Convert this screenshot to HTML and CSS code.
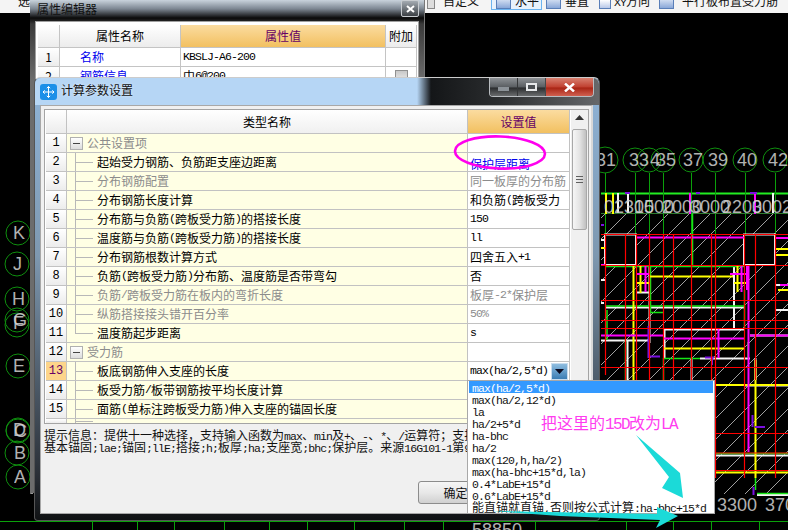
FILE: index.html
```html
<!DOCTYPE html>
<html lang="zh-CN">
<head>
<meta charset="utf-8">
<title>计算参数设置</title>
<link rel="stylesheet" href="styles.css">
</head>
<body>
<div class="desktop">

  <div class="toolbar">
    <span class="tb-frag tb-a">选</span>
    <i class="tb-icon tb-first"></i><span class="tb-text tb-gap1">自定义</span>
    <span class="tb-btn"><i class="tb-icon"></i><span class="tb-text">水平</span></span>
    <i class="tb-icon tb-gap2"></i><span class="tb-text tb-gap3">垂直</span>
    <i class="tb-icon tb-gap4 tb-small"></i><span class="tb-text tb-gap5"><b class="m">XY</b>方向</span>
    <i class="tb-icon tb-gap6"></i><span class="tb-text tb-gap7">平行板布置受力筋</span>
  </div>

  <svg class="cad" viewBox="0 0 788 530" aria-hidden="true">
    <defs>
      <pattern id="hatch" width="21" height="21" patternUnits="userSpaceOnUse">
        <path d="M-1 22 L22 -1" stroke="#c8c8c8" stroke-width="0.8"/>
      </pattern>
    </defs>
    <rect x="601" y="213" width="187" height="290" fill="url(#hatch)"/>
    <rect x="606" y="235" width="30" height="30" fill="#000"/>
    <rect x="745" y="235" width="30" height="30" fill="#000"/>
    <rect x="601" y="494" width="187" height="12" fill="#000"/>

    <g class="ln-grid">
      <path d="M601 193.500H788"/>
      <path d="M605.500 173V234M635.500 173V234M649.500 173V234M663.500 173V234M691.500 173V234M715.500 173V234M745.500 173V234M775.500 173V234"/>
      <path d="M0 521.500H788"/>
      <path d="M92.500 521V530M137.500 521V530M174.500 521V530M224.500 521V530M269.500 521V530M307.500 521V530M354.500 521V530M404.500 521V530M443.500 521V530M535.500 521V530M626.500 521V530M673.500 521V530M711.500 521V530M759.500 521V530"/>
    </g>
    <path class="ln-dim" d="M601 213.500H788"/>

    <g class="ln-w">
      <path d="M605 234.500H636V265H605ZM744 234.500H775V265H744Z"/>
      <path d="M618 193V213M628 193V213M773 193V213"/>
      <path d="M649.500 266V343M734 266V328"/>
      <path d="M605 307.500H744"/>
      <path d="M664 329.500H744M601 340.500H649M700 358.500H750M637 292.500H649"/>
      <path d="M664.500 329V358M627.500 341V500M691.500 358V500M755.500 358V380M757 495H788M750 335.500H788M745 385.500H788"/>
      <path d="M775 285H788M775 310H788M715 455.500H788M601 303H604M601 240H606M601 280H606"/>
    </g>
    <g class="ln-g">
      <path d="M692.500 213V265M605 266.500H744M650.500 266V312M744.500 290V328M605 306H744M625.500 340V500M663.500 358V500M664 358.500H700M755.500 478V490M748 342V358M757 493.500H788M664 312.500H650M715 453.500H788M607 310V340"/>
    </g>
    <g class="ln-y">
      <path d="M633.500 266V500M640.500 266V293M650 276.500H733M637 283H650M737.500 266V292M734 283H748"/>
      <path d="M664 348.500H744M755.500 360V478M715 385H788M715 472.500H788M775 249H788M775 255H788M601 248H606M613 193V214M778 290H788M606 193V214"/>
    </g>
    <g class="ln-m">
      <path d="M636 237.500H744M775 238H788M645.500 266V292M636 274H650M741.500 266V292M747 266V290M730 274H746M748.500 266V452"/>
      <path d="M601 335.500H663M664 338.500H744M718.500 328V358M750 335.500H788M780 285H788M755 193V214M690 193V214M601 265H606"/>
    </g>
    <g class="ln-p">
      <path d="M648.500 326V358M648 356.500H660M705 357.500H714M712 358V365M753.500 487V495M755 427H765M752.500 415V427M601 225H604M625 193H630M696 193H700M750 193H757"/>
    </g>
    <g class="ln-r">
      <path d="M601 234.500H788M601 265.500H788M601 300.500H788M601 320.500H788M601 328.500H788M601 367.500H788M715 433.500H788M715 453H788M715 470.500H788"/>
      <path d="M605.500 234V375M625.500 234V380M636.500 234V380M649.500 234V380M663.500 234V380M673.500 234V380M691.500 234V380M711.500 234V380M715.500 234V478M744.500 234V478M755.500 234V380M775.500 234V478"/>
    </g>

    <g class="cir">
      <circle cx="605" cy="160" r="13"/><circle cx="635" cy="160" r="12"/><circle cx="649" cy="160" r="12"/><circle cx="663" cy="160" r="12"/><circle cx="691" cy="160" r="12"/><circle cx="715" cy="160" r="12"/><circle cx="745" cy="160" r="12"/><circle cx="775" cy="160" r="12"/>
      <circle cx="18" cy="233" r="12"/><circle cx="17" cy="264" r="12"/><circle cx="17" cy="299" r="12"/><circle cx="17" cy="320" r="12"/><circle cx="17" cy="325" r="12"/><circle cx="18" cy="366" r="12"/><circle cx="18" cy="430" r="12"/><circle cx="18" cy="431" r="12"/><circle cx="17" cy="453" r="12"/><circle cx="18" cy="477" r="12"/>
    </g>
    <g class="lbl">
      <text x="596" y="166">31</text><text x="629" y="166">33</text><text x="650" y="166">4</text><text x="656" y="166">35</text><text x="683" y="166">37</text><text x="708" y="166">39</text><text x="737" y="166">40</text><text x="768" y="166">42</text>
      <text x="13" y="239">K</text><text x="13" y="270">J</text><text x="12" y="305">H</text><text x="13" y="326">G</text><text x="13" y="329">F</text><text x="13" y="372">E</text><text x="13" y="436">D</text><text x="14" y="437">C</text><text x="14" y="459">B</text><text x="14" y="483">A</text>
      <text x="604" y="213">02300</text><text x="634" y="213">1500</text><text x="662" y="213">2000</text><text x="690" y="213">3000</text><text x="722" y="213">2200</text><text x="752" y="213">3002</text>
      <text x="717" y="511">3300</text><text x="765" y="511">3700</text>
      <text x="472" y="536">58850</text>
    </g>
    <path class="ln-thin" d="M30.500 210V493.500H33"/>
  </svg>

  <section class="win editor">
    <header class="editor-title">
      <span>属性编辑器</span>
      <button class="editor-close" type="button">
        <svg width="9" height="8" viewBox="0 0 9 8"><path d="M1 1L8 7M8 1L1 7" stroke="#fff" stroke-width="2"/></svg>
      </button>
    </header>
    <div class="editor-body">
      <div class="e-row e-head">
        <div class="e-cell e-idx"></div>
        <div class="e-cell e-center">属性名称</div>
        <div class="e-cell e-center e-hot">属性值</div>
        <div class="e-cell e-center">附加</div>
      </div>
      <div class="e-row">
        <div class="e-cell e-idx e-center">1</div>
        <div class="e-cell e-link">名称</div>
        <div class="e-cell e-val"><span class="m">KBSLJ-A6-200</span></div>
        <div class="e-cell"></div>
      </div>
      <div class="e-row">
        <div class="e-cell e-idx e-center">2</div>
        <div class="e-cell e-link">钢筋信息</div>
        <div class="e-cell e-val">中<span class="m">6@200</span></div>
        <div class="e-cell e-center"><i class="e-check"></i></div>
      </div>
    </div>
  </section>

  <section class="win calc">
    <header class="calc-title">
      <svg class="calc-icon" viewBox="0 0 17 16" width="17" height="16">
        <rect width="17" height="16" rx="3" fill="#1c8fe8"/>
        <path d="M8.500 2.500V13.500M3 8H14M6.800 4.200L8.500 2.500L10.200 4.200M6.800 11.800L8.500 13.500L10.200 11.800M4.700 6.300L3 8L4.700 9.700M12.300 6.300L14 8L12.300 9.700" fill="none" stroke="#fff" stroke-width="1"/>
      </svg>
      <span class="calc-name">计算参数设置</span>
      <div class="title-fade"></div>
      <div class="title-dark">
        <div class="caps">
          <span class="cap"><i class="cap-min"></i></span>
          <span class="cap"><i class="cap-max"></i></span>
          <span class="cap cap-close">
            <svg width="11" height="9" viewBox="0 0 11 9"><path d="M1 .5L10 8.500M10 .5L1 8.500" stroke="#fff" stroke-width="2.400"/></svg>
          </span>
        </div>
      </div>
    </header>

    <div class="panel">
      <div class="grid">
        <div class="table">
          <div class="row head">
            <div class="idx"></div>
            <div class="name-h">类型名称</div>
            <div class="val-h">设置值</div>
          </div>
          <div class="row"><div class="idx">1</div><div class="name group"><i class="exp"></i><span class="dim">公共设置项</span></div><div class="val"></div></div>
          <div class="row"><div class="idx">2</div><div class="name leaf">起始受力钢筋、负筋距支座边距离</div><div class="val link">保护层距离</div></div>
          <div class="row"><div class="idx">3</div><div class="name leaf dim">分布钢筋配置</div><div class="val dim">同一板厚的分布筋</div></div>
          <div class="row"><div class="idx">4</div><div class="name leaf">分布钢筋长度计算</div><div class="val">和负筋 <span class="m">(</span>跨板受力</div></div>
          <div class="row"><div class="idx">5</div><div class="name leaf">分布筋与负筋<span class="m">(</span>跨板受力筋<span class="m">)</span>的搭接长度</div><div class="val"><span class="m">150</span></div></div>
          <div class="row"><div class="idx">6</div><div class="name leaf">温度筋与负筋<span class="m">(</span>跨板受力筋<span class="m">)</span>的搭接长度</div><div class="val"><span class="m">ll</span></div></div>
          <div class="row"><div class="idx">7</div><div class="name leaf">分布钢筋根数计算方式</div><div class="val">四舍五入<span class="m">+1</span></div></div>
          <div class="row"><div class="idx">8</div><div class="name leaf">负筋<span class="m">(</span>跨板受力筋<span class="m">)</span>分布筋、温度筋是否带弯勾</div><div class="val">否</div></div>
          <div class="row"><div class="idx">9</div><div class="name leaf dim">负筋<span class="m">/</span>跨板受力筋在板内的弯折长度</div><div class="val dim">板厚<span class="m">-2*</span>保护层</div></div>
          <div class="row"><div class="idx">10</div><div class="name leaf dim">纵筋搭接接头错开百分率</div><div class="val dim"><span class="m">50%</span></div></div>
          <div class="row"><div class="idx">11</div><div class="name leaf last">温度筋起步距离</div><div class="val"><span class="m">s</span></div></div>
          <div class="row"><div class="idx">12</div><div class="name group"><i class="exp"></i><span class="dim">受力筋</span></div><div class="val"></div></div>
          <div class="row"><div class="idx idx-on">13</div><div class="name leaf">板底钢筋伸入支座的长度</div>
            <div class="val combo"><span class="m">max(ha/2,5*d)</span><span class="combo-btn"><svg width="9" height="5" viewBox="0 0 9 5"><path d="M0 0H9L4.500 5Z" fill="#0a0a20"/></svg></span></div></div>
          <div class="row"><div class="idx">14</div><div class="name leaf">板受力筋<span class="m">/</span>板带钢筋按平均长度计算</div><div class="val"></div></div>
          <div class="row"><div class="idx">15</div><div class="name leaf">面筋<span class="m">(</span>单标注跨板受力筋<span class="m">)</span>伸入支座的锚固长度</div><div class="val"></div></div>
          <div class="row row-cut"><div class="idx"></div><div class="name leaf"></div><div class="val"></div></div>
        </div>
        <div class="scroll">
          <svg class="scroll-up" width="9" height="5" viewBox="0 0 9 5"><path d="M0 5H9L4.500 0Z" fill="#333"/></svg>
          <div class="thumb"><i></i><i></i><i></i></div>
        </div>
      </div>

      <div class="hint">
        <p>提示信息：提供十一种选择，支持输入函数为<span class="m">max</span>、<span class="m">min</span>及<span class="m">+</span>、<span class="m">-</span>、<span class="m">*</span>、<span class="m">/</span>运算符；支持</p>
        <p class="hint-two">基本锚固<span class="m">;lae;</span>锚固<span class="m">;llE;</span>搭接<span class="m">;h;</span>板厚<span class="m">;ha;</span>支座宽<span class="m">;bhc;</span>保护层。来源<span class="m">16G101-1</span>第<span class="m">9</span>页</p>
      </div>

      <div class="actions">
        <button class="btn" type="button">确定</button>
        <button class="btn" type="button">取消</button>
      </div>
    </div>
  </section>

  <ul class="drop">
    <li class="drop-on"><span class="m">max(ha/2,5*d)</span></li>
    <li><span class="m">max(ha/2,12*d)</span></li>
    <li><span class="m">la</span></li>
    <li><span class="m">ha/2+5*d</span></li>
    <li><span class="m">ha-bhc</span></li>
    <li><span class="m">ha/2</span></li>
    <li><span class="m">max(120,h,ha/2)</span></li>
    <li><span class="m">max(ha-bhc+15*d,la)</span></li>
    <li><span class="m">0.4*LabE+15*d</span></li>
    <li><span class="m">0.6*LabE+15*d</span></li>
    <li>能直锚就直锚<span class="m">,</span>否则按公式计算<span class="m">:ha-bhc+15*d</span></li>
  </ul>

  <svg class="marks" viewBox="0 0 788 530" aria-hidden="true">
    <ellipse cx="500" cy="152.500" rx="45" ry="16" fill="none" stroke="#ff00ee" stroke-width="2.600" transform="rotate(2 500 152)"/>
    <path d="M636 435L680 473L683 498L662 488L669 477Z" fill="#1bdad8"/>
    <path d="M492 511L657 514L657 507L678 516L656 528L660 520L560 516Z" fill="#1bdad8"/>
    <text class="mark-cn" x="541" y="429">把这里的</text>
    <text class="mark-lat" x="605" y="429">15D</text>
    <text class="mark-cn" x="629" y="429">改为</text>
    <text class="mark-lat" x="661" y="429">LA</text>
  </svg>
</div>
</body>
</html>
```

FILE: styles.css
```css
* { box-sizing: border-box; }
html, body { margin: 0; padding: 0; background: #000; }
body { font: 12px/1 "Noto Sans CJK SC", "Liberation Sans", sans-serif; color: #000; }
i { display: block; }
p, ul { margin: 0; padding: 0; }

.desktop { position: relative; width: 788px; height: 530px; overflow: hidden; background: #000; }
.m { font-family: "Liberation Mono", monospace; font-size: 11.500px; letter-spacing: -0.900px; font-weight: 400; }

/* toolbar */
.toolbar { display: flex; align-items: flex-start; height: 13px; background: #f4f4f4; overflow: hidden; }
.tb-text, .tb-frag { margin-top: -6px; line-height: 14px; color: #111; }
.tb-frag { width: 30px; padding-left: 18px; }
.tb-a { margin-right: 397px; }
.tb-icon { width: 15px; height: 9px; background: linear-gradient(#cfdcf0, #8aa8d8); border: 1px solid #5a7fb8; border-top: 0; }
.tb-first { width: 8px; margin-right: 8px; background: #ddd; border-color: #888; }
.tb-gap1 { margin-right: 12px; }
.tb-btn { display: flex; align-items: flex-start; width: 51px; height: 10px; padding-left: 4px; gap: 4px; border: 1px solid #6cb4f0; border-top: 0; background: #e8f2fc; }
.tb-gap2 { margin-left: 4px; }
.tb-gap3 { margin-left: 4px; }
.tb-gap4 { margin-left: 10px; }
.tb-small { width: 12px; background: linear-gradient(#fff, #b8c8e8); }
.tb-gap5 { margin-left: 3px; }
.tb-gap6 { margin-left: 9px; }
.tb-gap7 { margin-left: 8px; }

/* CAD canvas */
.cad { position: absolute; left: 0; top: 0; width: 788px; height: 530px; }
.cad path { fill: none; }
.ln-grid path { stroke: #0aa00a; stroke-width: 1; }
.ln-grid path:first-child { stroke: #22ee22; stroke-width: 2; }
.ln-dim { stroke: #2f7a2f; stroke-width: 1; }
.ln-w path { stroke: #f4f4f4; stroke-width: 2; }
.ln-g path { stroke: #16e616; stroke-width: 1.500; }
.ln-y path { stroke: #ffff00; stroke-width: 2; }
.ln-m path { stroke: #ff00ff; stroke-width: 2; }
.ln-p path { stroke: #7a10e0; stroke-width: 2; }
.ln-r path { stroke: #ff0000; stroke-width: 1.200; }
.ln-thin { stroke: #999; stroke-width: 1; }
.cir circle { fill: none; stroke: #0f8f0f; stroke-width: 1; }
.lbl text { font: 18px "Liberation Sans", sans-serif; fill: #d0d0d0; opacity: .85; }

/* windows */
.win { position: absolute; }

.editor { left: 30px; top: 0; width: 395px; height: 493px; background: linear-gradient(#c9d3dc 0, #7b8590 9px, #0a0a0a 18px, #3a3a3a 24px, #6c6c6c 80px); border-right: 1px solid #777; }
.editor-title { display: flex; align-items: center; justify-content: space-between; height: 20px; padding: 0 5px 3px 7px; color: #101010; }
.editor-close { display: flex; align-items: center; justify-content: center; width: 18px; height: 17px; padding: 0; background: linear-gradient(#a4abb2, #6a7076 55%, #3c4044); border: 1px solid #c8ccd0; border-radius: 2px; }
.editor-body { margin: 1px 5px 0 5px; padding: 3px 3px 0 2px; background: #fff; border: 1px solid #a0a0a0; height: 472px; }
.e-row { display: grid; grid-template-columns: 22px 121px 205px 31px; height: 19px; }
.e-head { height: 23px; font-size: 12px; }
.e-cell { display: flex; align-items: center; overflow: hidden; border-right: 1px solid #c4c4c4; border-bottom: 1px solid #c4c4c4; background: #fff; }
.e-center { justify-content: center; }
.e-idx, .e-head .e-cell { background: linear-gradient(#fff, #ececec); }
.e-head .e-hot { background: linear-gradient(#fbdca0, #f2c060); color: #660066; }
.e-link { padding-left: 20px; color: #0000ee; }
.e-val { padding-left: 2px; }
.e-check { width: 13px; height: 13px; background: linear-gradient(#c8c8c8, #f0f0f0); border: 1px solid #909090; }

.calc { left: 34px; top: 77px; width: 566px; height: 444px; padding: 0 6px 6px 5px; border: 1px solid #555; border-top-color: #ccc; border-radius: 6px 6px 4px 4px; background: linear-gradient(#8fb4d8, #7e98b0 40%, #2a2f36 90%, #101214); }
.calc-title { display: flex; align-items: center; height: 27px; margin: 0 -6px 0 -5px; padding-left: 5px; border-radius: 6px 6px 0 0; background: #b6d6f5; }
.calc-icon { flex: none; }
.calc-name { margin: -3px 0 0 4px; color: #111; text-shadow: 0 0 3px rgba(255,255,255,.7); }
.title-fade { flex: none; align-self: stretch; width: 14px; margin-left: auto; background: linear-gradient(90deg, #b6d6f5, #141618); }
.title-dark { display: flex; flex: none; justify-content: flex-end; align-self: stretch; width: 168px; padding-right: 5px; border-radius: 0 6px 0 0; background: linear-gradient(90deg, #141618, #2a2c2e 40%, #66686a); }
.caps { display: flex; height: 19px; gap: 1px; border: 1px solid #b8bcc0; border-top: 0; border-radius: 0 0 4px 4px; overflow: hidden; }
.cap { display: flex; align-items: center; justify-content: center; width: 27px; background: linear-gradient(#8c9094, #5a5e62 50%, #2a2c2e 55%, #6a6c6e); }
.cap-close { width: 47px; background: linear-gradient(#d88070, #c04030 50%, #a82414 55%, #d06050); }
.cap-min { width: 11px; height: 4px; margin-top: 4px; background: #8c9298; }
.cap-max { width: 11px; height: 8px; background: #4c5054; border: 2px solid #e6e8ea; }

.panel { display: flex; flex-direction: column; width: 553px; height: 409px; padding: 3px 5px 9px 3px; background: #f0f0f0; border: 1px solid #a8a8a8; border-right: 2px solid #d8d8d8; }
.grid { display: flex; flex: none; width: 545px; height: 315px; background: #fff; border: 1px solid #a4a4a4; padding-left: 1px; }
.table { flex: none; width: 525px; overflow: hidden; }
.row { display: grid; grid-template-columns: 21px 401px 102px; height: 19px; }
.row > div { display: flex; align-items: center; white-space: nowrap; overflow: hidden; border-bottom: 1px solid #c2c2c2; border-right: 1px solid #c2c2c2; }
.head { height: 24px; }
.idx { justify-content: center; background: linear-gradient(#fff, #ececec); font-family: "Liberation Mono", monospace; font-size: 12px; }
.idx-on { background: #fdd58a; color: #660066; }
.name-h { justify-content: center; background: linear-gradient(#fff, #f0f0f0); }
.val-h { justify-content: center; background: linear-gradient(#fbdca0, #f2c060); color: #660066; }
.name { background-color: #ffffe4; }
.leaf { padding-left: 30px; background-image: linear-gradient(#b8b8b8, #b8b8b8), linear-gradient(#b8b8b8, #b8b8b8); background-repeat: no-repeat; background-position: 8px 0, 8px 50%; background-size: 1px 100%, 18px 1px; }
.leaf.last { background-size: 1px 50%, 18px 1px; }
.group { padding-left: 3px; }
.exp { flex: none; width: 13px; height: 13px; margin-right: 4px; border: 1px solid #b0b0b0; background: linear-gradient(#444, #444) center / 7px 1px no-repeat, linear-gradient(#fff, #dcdcdc); }
.dim { color: #8c8c8c; }
.val { padding-left: 2px; background: #fff; }
.row > .val.link { align-items: flex-end; color: #0000ee; line-height: 15px; }
.combo { justify-content: space-between; padding-right: 1px; }
.combo-btn { display: flex; align-items: center; justify-content: center; width: 17px; height: 17px; border: 1px solid #c8dcee; background: linear-gradient(#8ebde0, #3b7db4); }
.row-cut { height: 4px; }
.row-cut > div { border-bottom: 0; }
.scroll { display: flex; flex: 1; flex-direction: column; align-items: center; padding-top: 5px; background: #f0f0f0; }
.scroll-up { flex: none; }
.thumb { display: flex; flex-direction: column; align-items: center; justify-content: center; gap: 2px; width: 15px; height: 101px; margin-top: 9px; border: 1px solid #a8a8a8; border-radius: 2px; background: linear-gradient(90deg, #f6f6f6, #e4e4e4 50%, #c0c0c0); }
.thumb i { width: 7px; height: 1px; background: #606060; }

.hint { flex: none; margin-top: 4px; white-space: nowrap; overflow: hidden; color: #111; }
.hint p { height: 12px; line-height: 13px; }
.hint .hint-two { height: 13px; }
.actions { display: flex; justify-content: flex-end; gap: 8px; margin-top: auto; padding-right: 10px; }
.btn { width: 75px; height: 23px; padding: 0; font: inherit; color: #111; border: 1px solid #8c8c8c; border-radius: 3px; background: linear-gradient(#f6f6f6, #e8e8e8 50%, #d0d0d0); }

/* dropdown */
.drop { position: absolute; left: 467px; top: 380px; width: 248px; height: 134px; padding: 0 1px; list-style: none; background: #fff; border: 1px solid #a8a8a8; overflow: hidden; }
.drop li { height: 12px; padding-left: 3px; line-height: 12px; white-space: nowrap; color: #111; }
.drop .drop-on { background: #3399ff; color: #fff; }

/* annotations */
.marks { position: absolute; left: 0; top: 0; width: 788px; height: 530px; pointer-events: none; }
.mark-cn { font: 16px "Noto Sans CJK SC", sans-serif; fill: #ff3cf0; }
.mark-lat { font: 16px "Liberation Mono", monospace; letter-spacing: -1.600px; fill: #ff3cf0; }
```
